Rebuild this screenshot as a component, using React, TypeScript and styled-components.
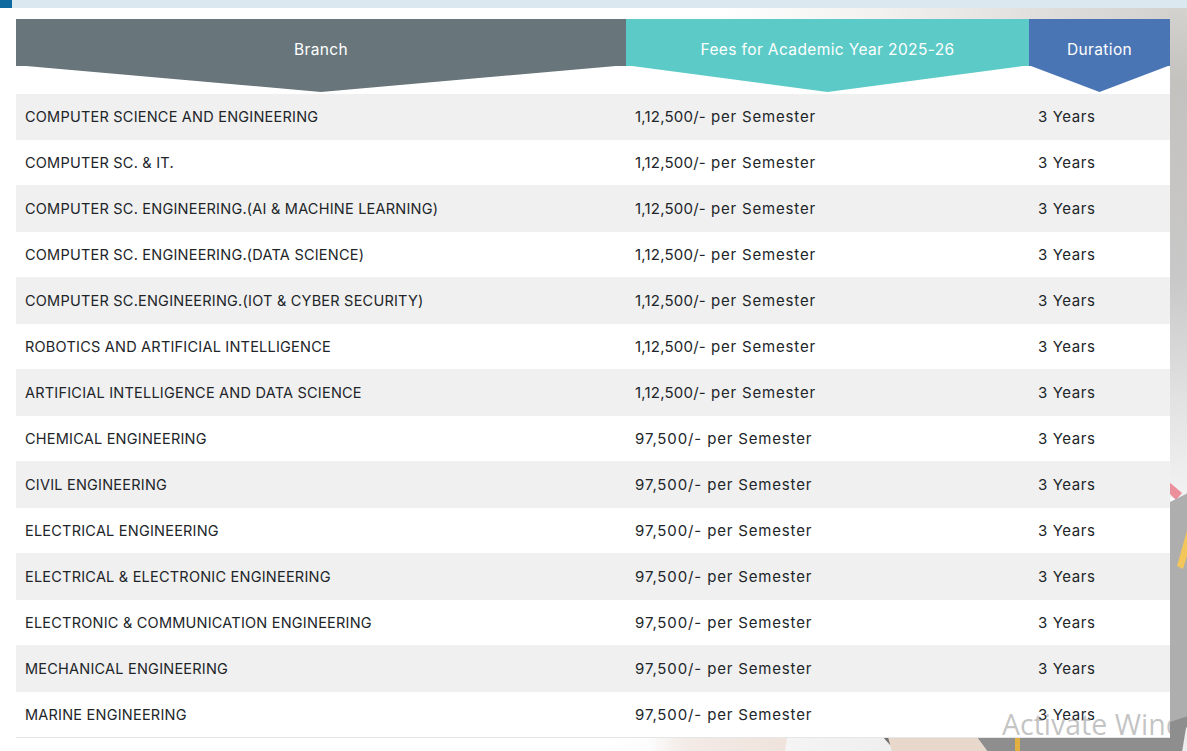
import React from 'react'
import styled, { createGlobalStyle } from 'styled-components'

const GlobalStyle = createGlobalStyle`
    html, body {
        margin: 0;
        padding: 0;
        background: #fff;
    }
    * {
        box-sizing: border-box;
    }
`

const Page = styled.div`
    position: relative;
    width: 1187px;
    height: 751px;
    overflow: hidden;
    font-family: Inter, "Liberation Sans", sans-serif;
    color: #212529;
`

const Backdrop = styled.svg`
    position: absolute;
    top: 0;
    left: 0;
    width: 1187px;
    height: 751px;
`

const TopBar = styled.div`
    position: relative;
    height: 8px;
    background: #dce8f0;
`

const TopAccent = styled.div`
    width: 12px;
    height: 8px;
    background: #0f6aa0;
`

const Main = styled.main`
    position: relative;
    width: 1170px;
    padding: 11px 0 0 16px;
`

const Grid = styled.div`
    display: grid;
    grid-template-columns: 610px 403px 141px;
`

const HeaderRow = styled(Grid)`
    height: 75px;
    padding-bottom: 2px;
`

const HeaderCell = styled.div<{ $bg: string; $inset: number }>`
    display: flex;
    justify-content: center;
    padding-top: 21px;
    background: ${(p) => p.$bg};
    color: #fff;
    font-size: 15.5px;
    letter-spacing: 0.38px;
    line-height: 19px;
    clip-path: polygon(0 0, 100% 0, 100% 47px, calc(100% - ${(p) => p.$inset}px) 47px, 50% 100%, ${(p) => p.$inset}px 47px, 0 47px);
`

const Row = styled(Grid)<{ $striped: boolean; $h: number; $last: boolean }>`
    height: ${(p) => p.$h}px;
    align-items: center;
    background: ${(p) => (p.$striped ? '#f0f0f0' : '#fff')};
    border-bottom: ${(p) => (p.$last ? '1px solid #e6e6e6' : 'none')};
`

const BranchCell = styled.div`
    padding-left: 9px;
    font-size: 14.5px;
    letter-spacing: 0.22px;
    line-height: 20px;
    white-space: nowrap;
`

const ValueCell = styled(BranchCell)`
    font-size: 15px;
    letter-spacing: 0.6px;
`

const FeeCell = styled(ValueCell)`
    letter-spacing: 0.83px;
`

const Amount = styled.span<{ $spacing: number }>`
    letter-spacing: ${(p) => p.$spacing}px;
`

const Watermark = styled.div`
    position: absolute;
    top: 706px;
    left: 1002px;
    width: 168px;
    overflow: hidden;
    font-family: "Open Sans", sans-serif;
    font-size: 28.5px;
    line-height: 36px;
    white-space: nowrap;
    color: rgba(110, 110, 110, 0.42);
`

const high = { amount: '1,12,500/-', spacing: 0.2 }
const low = { amount: '97,500/-', spacing: 0.88 }

const rows = [
    { branch: 'COMPUTER SCIENCE AND ENGINEERING', fee: high },
    { branch: 'COMPUTER SC. & IT.', fee: high },
    { branch: 'COMPUTER SC. ENGINEERING.(AI & MACHINE LEARNING)', fee: high },
    { branch: 'COMPUTER SC. ENGINEERING.(DATA SCIENCE)', fee: high },
    { branch: 'COMPUTER SC.ENGINEERING.(IOT & CYBER SECURITY)', fee: high },
    { branch: 'ROBOTICS AND ARTIFICIAL INTELLIGENCE', fee: high },
    { branch: 'ARTIFICIAL INTELLIGENCE AND DATA SCIENCE', fee: high },
    { branch: 'CHEMICAL ENGINEERING', fee: low },
    { branch: 'CIVIL ENGINEERING', fee: low },
    { branch: 'ELECTRICAL ENGINEERING', fee: low },
    { branch: 'ELECTRICAL & ELECTRONIC ENGINEERING', fee: low },
    { branch: 'ELECTRONIC & COMMUNICATION ENGINEERING', fee: low },
    { branch: 'MECHANICAL ENGINEERING', fee: low },
    { branch: 'MARINE ENGINEERING', fee: low },
]

// blurred photo that sits behind the page content
const Photo = () => (
    <Backdrop viewBox="0 0 1187 751">
        <defs>
            <linearGradient id="topFade" x1="0" x2="1" y1="0" y2="0">
                <stop offset="0" stopColor="#fff" />
                <stop offset="0.35" stopColor="#f2f1f0" />
                <stop offset="0.75" stopColor="#dddbd9" />
                <stop offset="1" stopColor="#d2d0cd" />
            </linearGradient>
            <linearGradient id="sideFade" x1="0" x2="0" y1="0" y2="1">
                <stop offset="0" stopColor="#d4d2cf" />
                <stop offset="0.15" stopColor="#c4c2bf" />
                <stop offset="0.55" stopColor="#c8c8c8" />
                <stop offset="0.8" stopColor="#e2e2e2" />
                <stop offset="1" stopColor="#f2f2f2" />
            </linearGradient>
            <linearGradient id="floorFade" x1="0" x2="1" y1="0" y2="0">
                <stop offset="0" stopColor="#fff" />
                <stop offset="1" stopColor="#eeeeee" />
            </linearGradient>
            <linearGradient id="skinFade" x1="0" x2="1" y1="0" y2="0">
                <stop offset="0" stopColor="#f3ebe7" stopOpacity="0" />
                <stop offset="0.25" stopColor="#f3ebe7" />
                <stop offset="1" stopColor="#efe3dc" />
            </linearGradient>
            <filter id="soft">
                <feGaussianBlur stdDeviation="0.7" />
            </filter>
        </defs>
        <rect x="720" y="8" width="467" height="12" fill="url(#topFade)" />
        <rect x="1170" y="8" width="17" height="490" fill="url(#sideFade)" />
        <rect x="600" y="738" width="300" height="13" fill="url(#floorFade)" />
        <polygon points="650,738 787,738 785,751 650,751" fill="url(#skinFade)" />
        <g filter="url(#soft)">
            <polygon points="1168,481 1182,493 1176,500 1168,492" fill="#ec8f9c" />
            <polygon points="1170,502 1180,497 1188,493 1188,752 1170,752" fill="#aeaeae" />
            <polygon points="1188,527 1188,553 1183,569 1177,566" fill="#f2c65a" />
            <polygon points="883,737 890,737 890,745" fill="#707070" />
            <polygon points="888,737 977,737 988,752 892,752" fill="#e8d8cc" />
            <polygon points="977,737 1170,722 1188,716 1188,752 988,752" fill="#8e8e8e" />
            <rect x="1015" y="737" width="5" height="15" fill="#e2b040" />
            <polygon points="1186,728 1188,726 1188,752 1182,752" fill="#ececec" />
        </g>
    </Backdrop>
)

export default function App() {
    return (
        <Page>
            <GlobalStyle />
            <Photo />
            <TopBar>
                <TopAccent />
            </TopBar>
            <Main>
                <HeaderRow>
                    <HeaderCell $bg="#68767b" $inset={10}>Branch</HeaderCell>
                    <HeaderCell $bg="#5ccbc7" $inset={6}>Fees for Academic Year 2025-26</HeaderCell>
                    <HeaderCell $bg="#4a75b5" $inset={2}>Duration</HeaderCell>
                </HeaderRow>
                {rows.map(({ branch, fee }, i) => (
                    <Row
                        key={branch}
                        $striped={i % 2 === 0}
                        $h={i === 0 || i === rows.length - 1 ? 46 : i % 2 === 0 ? 47 : 45}
                        $last={i === rows.length - 1}
                    >
                        <BranchCell>{branch}</BranchCell>
                        <FeeCell><Amount $spacing={fee.spacing}>{fee.amount}</Amount> per Semester</FeeCell>
                        <ValueCell>3 Years</ValueCell>
                    </Row>
                ))}
            </Main>
            <Watermark>Activate Windows</Watermark>
        </Page>
    )
}
